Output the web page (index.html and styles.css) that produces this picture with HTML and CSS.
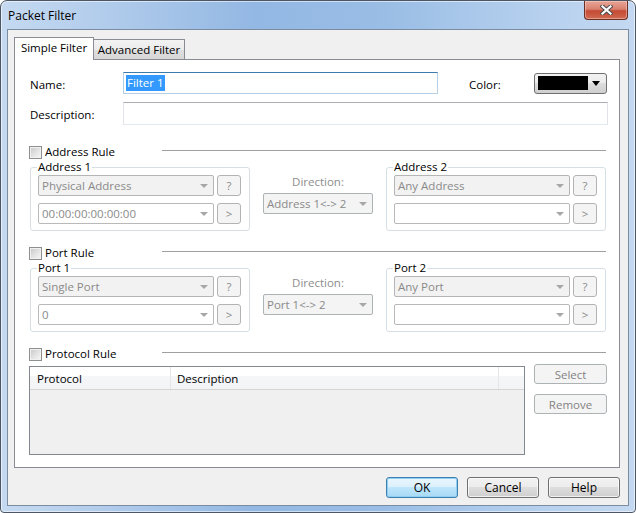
FILE: index.html
```html
<!DOCTYPE html>
<html lang="en">
<head>
    <meta charset="UTF-8">
    <title>Packet Filter</title>
    <link rel="stylesheet" href="styles.css">
</head>
<body>

<div class="window">
    <!-- Title bar -->
    <div class="titlebar">
        <span class="title">Packet Filter</span>
        <div class="close-btn">
            <svg width="13" height="10" viewBox="0 0 13 10">
                <path d="M2.5 1.5 L10.5 8.5 M10.5 1.5 L2.5 8.5" stroke="#4b4b4b" stroke-width="4.2" stroke-linecap="square"/>
                <path d="M2.5 1.5 L10.5 8.5 M10.5 1.5 L2.5 8.5" stroke="#ffffff" stroke-width="2.2" stroke-linecap="square"/>
            </svg>
        </div>
    </div>

    <div class="client">
        <div class="tabs">
            <div class="tab active">Simple Filter</div>
            <div class="tab">Advanced Filter</div>
        </div>

        <div class="tab-panel">
            <div class="field-row name-row">
                <label class="field-label">Name:</label>
                <div class="textbox focused name-box"><span class="selection">Filter 1</span></div>
                <label class="color-label">Color:</label>
                <div class="color-combo"><span class="swatch"></span><span class="arrow dark"></span></div>
            </div>
            <div class="field-row desc-row">
                <label class="field-label">Description:</label>
                <div class="textbox desc-box"></div>
            </div>

            <!-- Address rule -->
            <div class="rule-header">
                <span class="checkbox"></span>
                <span class="rule-title">Address Rule</span>
                <span class="rule-line"></span>
            </div>
            <div class="rule-body">
                <fieldset class="group">
                    <legend>Address 1</legend>
                    <div class="combo-row">
                        <div class="combo">Physical Address<span class="arrow"></span></div>
                        <div class="mini-btn">?</div>
                    </div>
                    <div class="combo-row">
                        <div class="combo edit">00:00:00:00:00:00<span class="arrow"></span></div>
                        <div class="mini-btn">&gt;</div>
                    </div>
                </fieldset>
                <div class="direction">
                    <div class="direction-label">Direction:</div>
                    <div class="combo dir-combo">Address 1&lt;-&gt; 2<span class="arrow"></span></div>
                </div>
                <fieldset class="group">
                    <legend>Address 2</legend>
                    <div class="combo-row">
                        <div class="combo">Any Address<span class="arrow"></span></div>
                        <div class="mini-btn">?</div>
                    </div>
                    <div class="combo-row">
                        <div class="combo edit"><span class="arrow"></span></div>
                        <div class="mini-btn">&gt;</div>
                    </div>
                </fieldset>
            </div>

            <!-- Port rule -->
            <div class="rule-header">
                <span class="checkbox"></span>
                <span class="rule-title">Port Rule</span>
                <span class="rule-line"></span>
            </div>
            <div class="rule-body">
                <fieldset class="group">
                    <legend>Port 1</legend>
                    <div class="combo-row">
                        <div class="combo">Single Port<span class="arrow"></span></div>
                        <div class="mini-btn">?</div>
                    </div>
                    <div class="combo-row">
                        <div class="combo edit">0<span class="arrow"></span></div>
                        <div class="mini-btn">&gt;</div>
                    </div>
                </fieldset>
                <div class="direction">
                    <div class="direction-label">Direction:</div>
                    <div class="combo dir-combo">Port 1&lt;-&gt; 2<span class="arrow"></span></div>
                </div>
                <fieldset class="group">
                    <legend>Port 2</legend>
                    <div class="combo-row">
                        <div class="combo">Any Port<span class="arrow"></span></div>
                        <div class="mini-btn">?</div>
                    </div>
                    <div class="combo-row">
                        <div class="combo edit"><span class="arrow"></span></div>
                        <div class="mini-btn">&gt;</div>
                    </div>
                </fieldset>
            </div>

            <!-- Protocol rule -->
            <div class="rule-header">
                <span class="checkbox"></span>
                <span class="rule-title">Protocol Rule</span>
                <span class="rule-line"></span>
            </div>
            <div class="protocol-body">
                <div class="protocol-table">
                    <div class="table-header">
                        <div class="col col-protocol">Protocol</div>
                        <div class="col col-desc">Description</div>
                        <div class="col col-rest"></div>
                    </div>
                </div>
                <div class="side-buttons">
                    <div class="side-btn">Select</div>
                    <div class="side-btn">Remove</div>
                </div>
            </div>
        </div>

        <div class="dialog-buttons">
            <div class="btn default">OK</div>
            <div class="btn">Cancel</div>
            <div class="btn">Help</div>
        </div>
    </div>
</div>

</body>
</html>
```

FILE: styles.css
```css
* {
    box-sizing: border-box;
}

body {
    margin: 0;
    background: #fff;
    font-family: "Segoe UI", "Open Sans", sans-serif;
    font-size: 11.5px;
    color: #000;
}

.window {
    width: 636px;
    height: 513px;
    border: 1px solid #4c5664;
    border-radius: 7px 7px 4px 4px;
    background: linear-gradient(to right, #c5daf1 0%, #b3cdec 15%, #93b8e3 40%, #99bde5 60%, #b6d0ee 85%, #c4d9f1 100%);
    box-shadow: inset 0 0 0 1px rgba(255, 255, 255, 0.55);
    padding: 0 6px 6px 6px;
    display: flex;
    flex-direction: column;
}

/* Title bar */
.titlebar {
    height: 28px;
    display: flex;
    align-items: center;
    justify-content: space-between;
    padding-left: 1px;
}

.title {
    font-size: 12px;
    padding-top: 1px;
}

.close-btn {
    align-self: flex-start;
    width: 44px;
    height: 19px;
    margin-right: 1px;
    border: 1px solid #6b2e25;
    border-top: none;
    border-radius: 0 0 4px 4px;
    background: linear-gradient(#e7a597 0%, #d98171 45%, #c54a33 55%, #cf6a52 100%);
    box-shadow: inset 0 0 0 1px rgba(255, 220, 210, 0.45);
    display: flex;
    align-items: center;
    justify-content: center;
}

/* Client area */
.client {
    flex: 1;
    background: #f0f0f0;
    border: 1px solid #7b8ba0;
    padding: 7px 8px 0 6px;
}

.tabs {
    display: flex;
    align-items: flex-end;
    height: 22px;
}

.tab {
    height: 20px;
    width: 92px;
    margin-left: -1px;
    border: 1px solid #898c95;
    border-bottom: none;
    background: linear-gradient(#f3f3f3 0%, #ebebeb 50%, #dedede 50%, #d8d8d8 100%);
    display: flex;
    align-items: center;
    justify-content: center;
    line-height: 14px;
}

.tab.active {
    height: 23px;
    width: 80px;
    margin-left: 0;
    margin-bottom: -1px;
    background: #fff;
    position: relative;
    z-index: 1;
    padding-bottom: 3px;
}

.tab-panel {
    height: 409px;
    background: #fff;
    border: 1px solid #898c95;
    padding: 12px 11px 0 14px;
}

/* Name / description */
.field-row {
    display: flex;
    align-items: center;
}

.name-row {
    height: 22px;
}

.desc-row {
    height: 23px;
    margin-top: 8px;
}

.field-label {
    width: 94px;
    padding-left: 1px;
    padding-top: 2px;
}

.textbox {
    height: 100%;
    border: 1px solid #e2e3ea;
    border-top-color: #abadb3;
    border-bottom-color: #e3e9ef;
    background: #fff;
    padding: 0 2px;
    display: flex;
    align-items: center;
}

.textbox.focused {
    border-color: #b5cfe7;
    border-top-color: #3d7bad;
}

.name-box {
    width: 315px;
}

.desc-box {
    flex: 1;
}

.selection {
    background: #3399ff;
    color: #fff;
    line-height: 16px;
    padding: 0 1px;
}

.color-label {
    margin-left: 31px;
    width: 65px;
    padding-top: 2px;
}

.color-combo {
    width: 73px;
    height: 21px;
    border: 1px solid #707070;
    border-radius: 3px;
    background: linear-gradient(#f2f2f2 0%, #ebebeb 50%, #dddddd 50%, #cfcfcf 100%);
    display: flex;
    align-items: center;
    padding: 0 6px 0 3px;
}

.swatch {
    width: 50px;
    height: 14px;
    background: #000;
}

.arrow {
    width: 0;
    height: 0;
    border-left: 4px solid transparent;
    border-right: 4px solid transparent;
    border-top: 4px solid #a7a7a7;
    margin-left: auto;
}

.arrow.dark {
    border-left-width: 4.5px;
    border-right-width: 4.5px;
    border-top: 5px solid #000;
}

/* Rule sections */
.rule-header {
    display: flex;
    align-items: flex-start;
    height: 15px;
    margin-top: 15px;
}

.desc-row + .rule-header {
    margin-top: 20px;
}

.checkbox {
    width: 13px;
    height: 13px;
    margin-top: 1px;
    border: 1px solid #8e8f8f;
    background: linear-gradient(135deg, #c6c6c6 0%, #e4e4e4 55%, #f7f7f7 100%);
    box-shadow: inset 0 0 0 1px #f1f1f1;
}

.rule-title {
    width: 120px;
    padding-left: 3px;
    line-height: 14px;
}

.rule-line {
    flex: 1;
    height: 1px;
    margin-top: 5px;
    margin-right: 2px;
    background: #a0a0a0;
}

.rule-body {
    display: flex;
}

.group {
    margin: 0 0 0 1px;
    width: 220px;
    min-width: 0;
    border: 1px solid #d5dfe5;
    border-radius: 3px;
    padding: 1px 8px 6px 7px;
}

.group + .direction + .group {
    margin-left: 0;
}

.group legend {
    padding: 0 1px;
    margin-left: -1px;
    line-height: 14px;
}

.combo-row {
    display: flex;
    gap: 3px;
    height: 21px;
}

.combo-row + .combo-row {
    margin-top: 7px;
}

.combo {
    flex: 1;
    height: 21px;
    border: 1px solid #b5b5b5;
    border-radius: 2px;
    background: #f2f2f2;
    color: #8a8a8a;
    display: flex;
    align-items: center;
    padding: 0 5px 0 3px;
    white-space: nowrap;
}

.combo.edit {
    background: #fff;
    border-color: #b9b9b9;
}

.mini-btn {
    width: 24px;
    height: 21px;
    border: 1px solid #b3b3b3;
    border-radius: 3px;
    background: #f4f4f4;
    color: #8a8a8a;
    display: flex;
    align-items: center;
    justify-content: center;
}

.direction {
    width: 136px;
    padding-top: 15px;
    display: flex;
    flex-direction: column;
    align-items: center;
}

.direction-label {
    color: #8d8d8d;
    line-height: 14px;
}

.dir-combo {
    flex: none;
    width: 110px;
    margin-top: 4px;
    border-color: #adb2b5;
    background: #f4f4f4;
}

/* Protocol */
.protocol-body {
    display: flex;
    margin-top: 4px;
}

.protocol-table {
    width: 496px;
    height: 89px;
    border: 1px solid #828790;
    background: #f0f0f0;
}

.table-header {
    display: flex;
    height: 23px;
    border-bottom: 1px solid #d5d5d5;
    background: linear-gradient(#ffffff 0%, #ffffff 40%, #f5f6f7 40%, #f3f4f6 100%);
}

.col {
    display: flex;
    align-items: center;
    border-right: 1px solid #e3e5e8;
}

.col-protocol {
    width: 141px;
    padding-left: 7px;
}

.col-desc {
    width: 328px;
    padding-left: 6px;
}

.col-rest {
    flex: 1;
    border-right: none;
}

.side-buttons {
    margin-left: 9px;
    margin-top: -2px;
    display: flex;
    flex-direction: column;
    gap: 10px;
}

.side-btn {
    width: 73px;
    height: 20px;
    border: 1px solid #adb2b5;
    border-radius: 3px;
    background: #f4f4f4;
    color: #838383;
    display: flex;
    align-items: center;
    justify-content: center;
}

/* Dialog buttons */
.dialog-buttons {
    display: flex;
    justify-content: flex-end;
    gap: 9px;
    margin-top: 9px;
}

.btn {
    width: 72px;
    height: 21px;
    border: 1px solid #707070;
    border-radius: 3px;
    background: linear-gradient(#f2f2f2 0%, #ebebeb 50%, #dddddd 50%, #cfcfcf 100%);
    box-shadow: inset 0 0 0 1px rgba(255, 255, 255, 0.7);
    display: flex;
    align-items: center;
    justify-content: center;
    font-size: 12px;
}

.btn.default {
    border-color: #3c7fb1;
    background: linear-gradient(#eaf6fd 0%, #d9f0fc 50%, #bee6fd 50%, #a7d9f5 100%);
    box-shadow: inset 0 0 0 1px #8fd0f0;
}
```
